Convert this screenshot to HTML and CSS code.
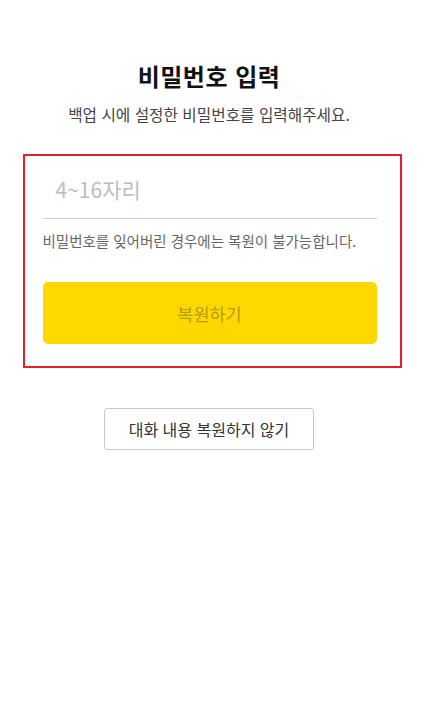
FILE: index.html
```html
<!DOCTYPE html>
<html lang="ko">
<head>
<meta charset="utf-8">
<link rel="stylesheet" href="styles.css">
</head>
<body>
<main class="page">
  <h1 class="title">비밀번호 입력</h1>
  <p class="subtitle">백업 시에 설정한 비밀번호를 입력해주세요.</p>
  <section class="box">
    <div class="field"><span class="placeholder">4~16자리</span></div>
    <p class="hint">비밀번호를 잊어버린 경우에는 복원이 불가능합니다.</p>
    <div class="restore">복원하기</div>
  </section>
  <div class="skip-wrap"><div class="skip">대화 내용 복원하지 않기</div></div>
</main>
</body>
</html>
```
FILE: styles.css
```css
* { box-sizing: border-box; }
html, body { margin: 0; padding: 0; background: #fff; }
body {
  width: 431px;
  height: 706px;
  font-family: "Noto Sans CJK KR", "Noto Sans", sans-serif;
  overflow: hidden;
}
.page {
  width: 418px;
  display: flex;
  flex-direction: column;
  align-items: center;
  padding-top: 58px;
}
.title {
  margin: 0;
  font-size: 24px;
  font-weight: 700;
  line-height: 36px;
  color: #111;
  letter-spacing: 0.5px;
}
.subtitle {
  margin: 10px 0 0;
  font-size: 15.7px;
  line-height: 22px;
  color: #444;
}
.box {
  margin-top: 28px;
  width: 379px;
  margin-left: 6px;
  border: 2px solid #e3212b;
  padding: 16px 23px 22px 18px;
  display: flex;
  flex-direction: column;
}
.field {
  height: 47px;
  border-bottom: 1px solid #cfcfcf;
  padding: 2px 0 0 13px;
  display: flex;
  align-items: flex-start;
}
.placeholder {
  font-size: 21px;
  line-height: 30px;
  color: #bdbdbd;
}
.hint {
  margin: 12px 0 0;
  font-size: 14.5px;
  line-height: 20px;
  color: #666;
}
.restore {
  margin-top: 31px;
  height: 62px;
  background: #fed800;
  border-radius: 5px;
  display: flex;
  align-items: center;
  justify-content: center;
  font-size: 17.5px;
  color: #b49c13;
}
.skip-wrap {
  margin-top: 40px;
  display: flex;
  justify-content: center;
}
.skip {
  width: 210px;
  height: 42px;
  border: 1px solid #c9c9c9;
  border-radius: 3px;
  display: flex;
  align-items: center;
  justify-content: center;
  font-size: 16px;
  color: #333;
}
```
